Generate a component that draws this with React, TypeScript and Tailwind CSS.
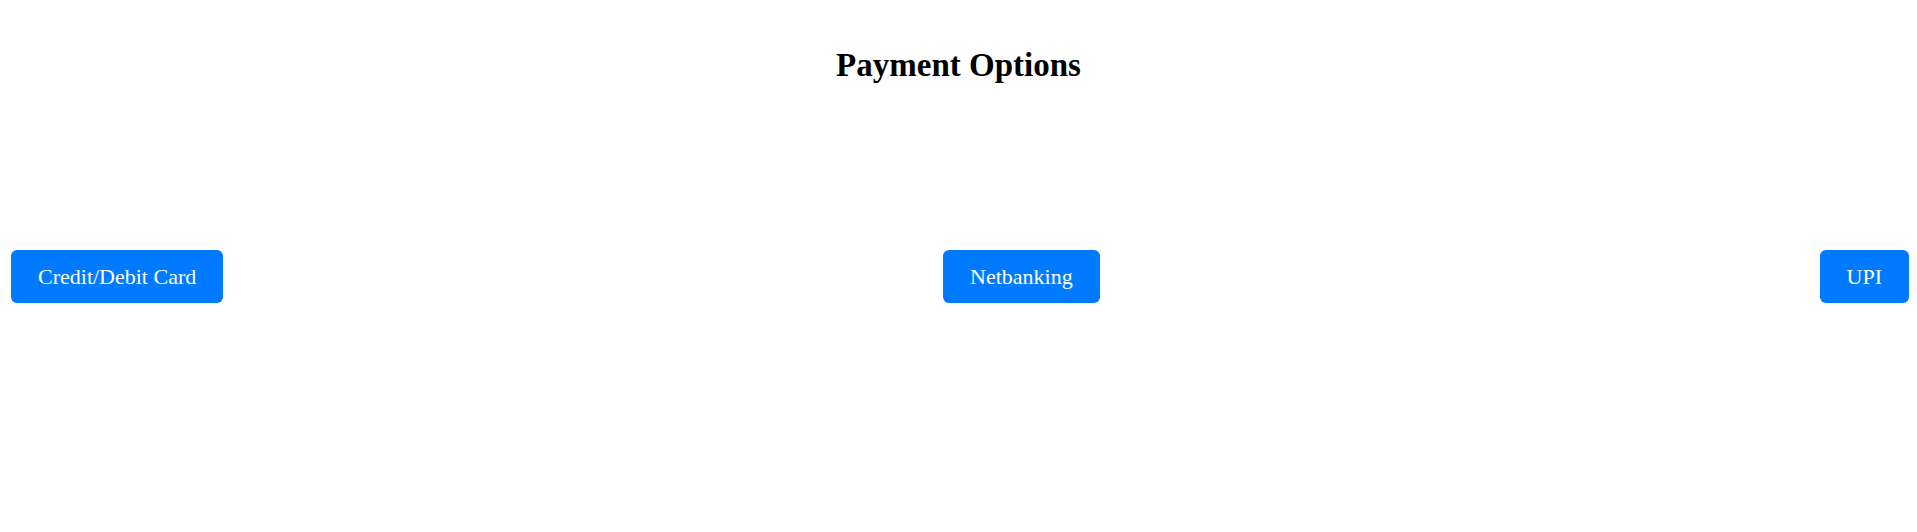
export default function App() {
  return (
    <div className="w-[1917px] h-[532px] bg-white" style={{ fontFamily: '"Liberation Serif", "Times New Roman", serif' }}>
      <h1 className="pt-[46px] text-center text-[33px] leading-[38px] font-bold text-black">Payment Options</h1>
      <div className="mt-[166px] flex justify-between pl-[11px] pr-[8px]">
        <button className="h-[53px] px-[27px] rounded-[6px] bg-[#007bff] text-white text-[22px]">Credit/Debit Card</button>
        <button className="h-[53px] px-[27px] rounded-[6px] bg-[#007bff] text-white text-[22px]">Netbanking</button>
        <button className="h-[53px] px-[27px] rounded-[6px] bg-[#007bff] text-white text-[22px]">UPI</button>
      </div>
    </div>
  );
}
